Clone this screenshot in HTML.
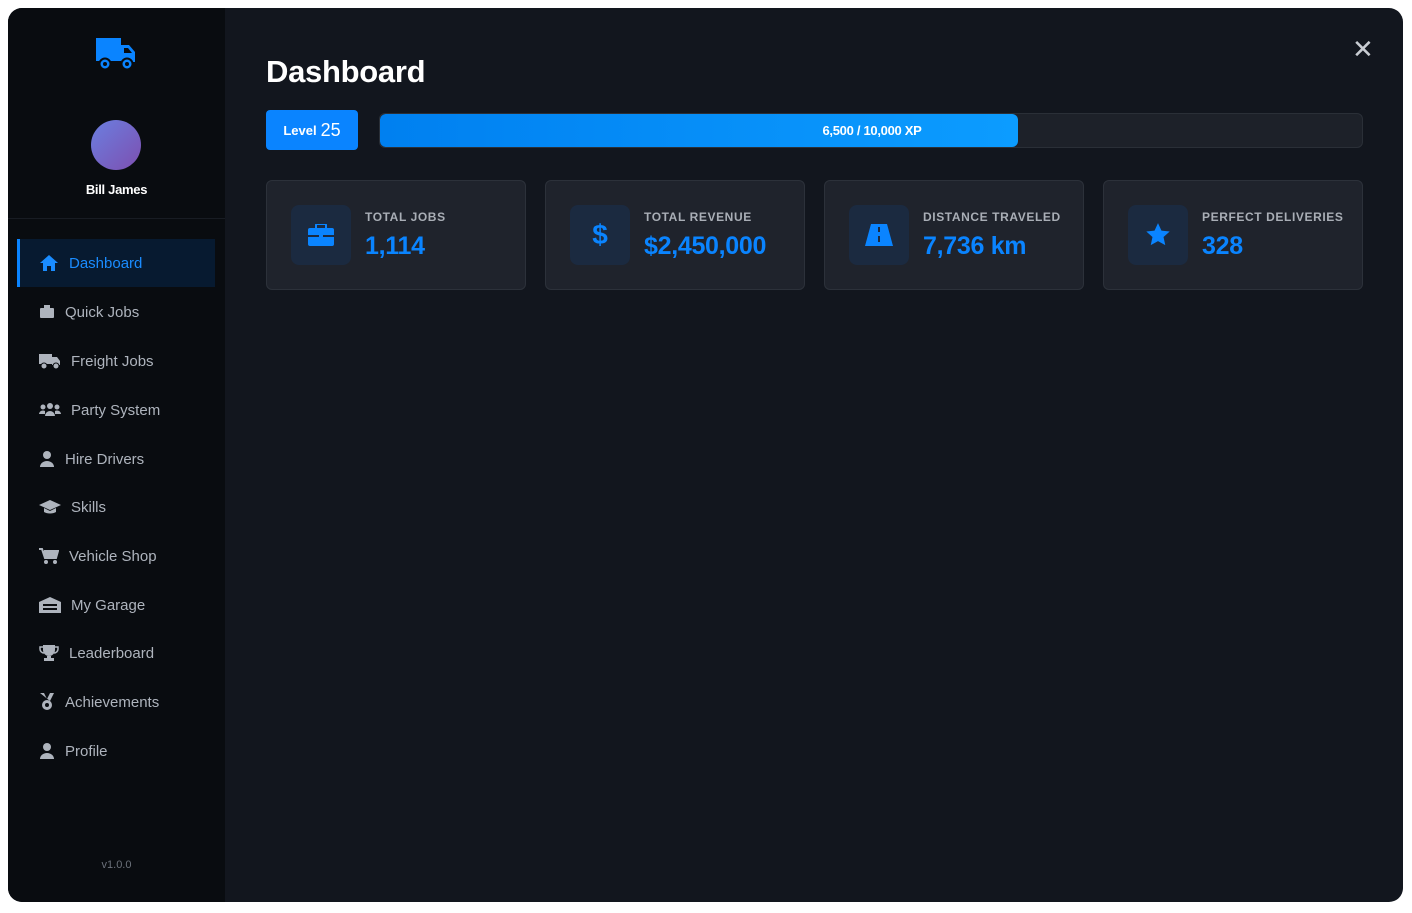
<!DOCTYPE html>
<html><head><meta charset="utf-8"><style>
*{box-sizing:border-box;margin:0;padding:0}
body{width:1412px;height:913px;background:#fff;font-family:"Liberation Sans",sans-serif;position:relative;overflow:hidden}
.win{position:absolute;left:8px;top:8px;width:1395px;height:894px;border-radius:14px;overflow:hidden;background:#12161e}
.side{position:absolute;left:0;top:0;width:217px;height:894px;background:#090c10}
.logo{position:absolute;left:87px;top:29px}
.av{position:absolute;left:83px;top:112px;width:50px;height:50px;border-radius:50%;background:linear-gradient(135deg,#6b7fe0,#7d4fb0)}
.name{position:absolute;left:0;width:217px;top:174px;text-align:center;color:#fff;font-weight:bold;font-size:13px;letter-spacing:-0.3px}
.sep{position:absolute;left:0;top:210px;width:217px;height:1px;background:#181c23}
.nav{position:absolute;left:9px;height:48px;width:198px;display:flex;align-items:center;padding-left:22px;color:#aeb4bd;font-size:15px}
.nav svg{margin-right:10px}
.nav.act{background:#071a30;border-left:3px solid #0a84ff;color:#1a8cff;padding-left:19px}
.ver{position:absolute;left:0;width:217px;top:851px;text-align:center;color:#6c727b;font-size:11px}
h1{position:absolute;left:258px;top:46px;color:#fff;font-size:31px;font-weight:bold;letter-spacing:-0.3px}
.close{position:absolute;left:1344px;top:26px;color:#c8ccd2;font-size:26px}
.lvl{position:absolute;left:258px;top:102px;width:92px;height:40px;background:#0a84ff;border-radius:4px;color:#fff;font-size:13px;font-weight:bold;display:flex;align-items:center;justify-content:center;gap:4px}
.lvl b{font-size:18px;font-weight:normal}
.bar{position:absolute;left:371px;top:105px;width:984px;height:35px;background:#1d2129;border:1px solid #2a2f37;border-radius:6px;overflow:hidden}
.fill{position:absolute;left:0;top:0;height:100%;width:638px;background:linear-gradient(90deg,#0080f0,#0c9cff);border-radius:6px}
.bt{position:absolute;left:0;width:984px;top:9px;text-align:center;color:#fff;font-size:13px;font-weight:bold;letter-spacing:-0.3px}
.card{position:absolute;top:172px;width:260px;height:110px;background:#1f232c;border:1px solid #2c313a;border-radius:6px}
.ic{position:absolute;left:24px;top:24px;width:60px;height:60px;background:#1b2a40;border-radius:8px;display:flex;align-items:center;justify-content:center}
.lab{position:absolute;left:98px;top:29px;color:#a9aeb6;font-size:12px;font-weight:bold;letter-spacing:0.6px}
.val{position:absolute;left:98px;top:51px;color:#0a84ff;font-size:25px;font-weight:bold;letter-spacing:-0.3px}
</style></head><body>
<div class="win">
<div class="side">
<svg class="logo" width="42" height="34" viewBox="0 0 42 34"><path d="M1 1h25v23H1z" fill="#0a84ff"/><path d="M26 8h8l6 7v10H26z" fill="#0a84ff"/><path d="M29 11h4l4 5h-8z" fill="#090c10"/><circle cx="10" cy="27" r="5.5" fill="#0a84ff" stroke="#090c10" stroke-width="2"/><circle cx="32" cy="27" r="5.5" fill="#0a84ff" stroke="#090c10" stroke-width="2"/><circle cx="10" cy="27" r="2" fill="#090c10"/><circle cx="32" cy="27" r="2" fill="#090c10"/></svg>
<div class="av"></div>
<div class="name">Bill James</div>
<div class="sep"></div>
<div class="nav act" style="top:231px"><svg width="20" height="18" viewBox="0 0 20 18"><path d="M10 1L1 9h3v8h4v-5h4v5h4V9h3z" fill="#1a8cff"/></svg>Dashboard</div>
<div class="nav" style="top:280px"><svg width="16" height="14"><rect x="1" y="3" width="14" height="10" rx="1" fill="#aeb4bd"/><rect x="5" y="0" width="6" height="3" fill="#aeb4bd"/></svg>Quick Jobs</div>
<div class="nav" style="top:329px"><svg width="22" height="16"><rect x="0" y="1" width="13" height="10" fill="#aeb4bd"/><path d="M13 4h5l3 4v4h-8z" fill="#aeb4bd"/><circle cx="5" cy="13" r="3" fill="#aeb4bd" stroke="#090c10"/><circle cx="17" cy="13" r="3" fill="#aeb4bd" stroke="#090c10"/></svg>Freight Jobs</div>
<div class="nav" style="top:378px"><svg width="22" height="16"><circle cx="11" cy="4" r="3" fill="#aeb4bd"/><circle cx="4" cy="5" r="2.5" fill="#aeb4bd"/><circle cx="18" cy="5" r="2.5" fill="#aeb4bd"/><path d="M6 14a5 5 0 0 1 10 0zM0 12a4 4 0 0 1 6-3v3zM22 12a4 4 0 0 0-6-3v3z" fill="#aeb4bd"/></svg>Party System</div>
<div class="nav" style="top:427px"><svg width="16" height="16"><circle cx="8" cy="4" r="4" fill="#aeb4bd"/><path d="M1 16a7 6 0 0 1 14 0z" fill="#aeb4bd"/></svg>Hire Drivers</div>
<div class="nav" style="top:475px"><svg width="22" height="14"><path d="M11 0L0 5l11 5 11-5z" fill="#aeb4bd"/><path d="M5 8v4c3 2 9 2 12 0V8l-6 3z" fill="#aeb4bd"/></svg>Skills</div>
<div class="nav" style="top:524px"><svg width="20" height="16"><path d="M0 1h3l3 9h11l2-7H5" fill="#aeb4bd" stroke="#aeb4bd" stroke-width="2"/><circle cx="7" cy="14" r="2" fill="#aeb4bd"/><circle cx="16" cy="14" r="2" fill="#aeb4bd"/></svg>Vehicle Shop</div>
<div class="nav" style="top:573px"><svg width="22" height="16"><path d="M0 5l11-5 11 5v11H0z" fill="#aeb4bd"/><rect x="4" y="7" width="14" height="2" fill="#090c10"/><rect x="4" y="11" width="14" height="2" fill="#090c10"/></svg>My Garage</div>
<div class="nav" style="top:621px"><svg width="20" height="16"><path d="M4 0h12v5a6 6 0 0 1-12 0zM8 11h4v2h3v3H5v-3h3z" fill="#aeb4bd"/><path d="M4 2H1v2a4 4 0 0 0 4 4M16 2h3v2a4 4 0 0 1-4 4" fill="none" stroke="#aeb4bd" stroke-width="1.5"/></svg>Leaderboard</div>
<div class="nav" style="top:670px"><svg width="16" height="18"><path d="M1 0h4l3 6 3-6h4l-4 8" fill="#aeb4bd"/><circle cx="8" cy="12" r="5" fill="#aeb4bd"/><circle cx="8" cy="12" r="2" fill="#090c10"/></svg>Achievements</div>
<div class="nav" style="top:719px"><svg width="16" height="16"><circle cx="8" cy="4" r="4" fill="#aeb4bd"/><path d="M1 16a7 6 0 0 1 14 0z" fill="#aeb4bd"/></svg>Profile</div>
<div class="ver">v1.0.0</div>
</div>
<h1>Dashboard</h1>
<div class="close">✕</div>
<div class="lvl">Level <b>25</b></div>
<div class="bar"><div class="fill"></div><div class="bt">6,500 / 10,000 XP</div></div>
<div class="card" style="left:258px"><div class="ic"><svg width="26" height="22"><rect x="0" y="4" width="26" height="18" rx="2" fill="#0a84ff"/><rect x="8" y="0" width="10" height="5" rx="1" fill="none" stroke="#0a84ff" stroke-width="2"/><rect x="0" y="11" width="26" height="2" fill="#1b2a40"/><rect x="11" y="10" width="4" height="4" fill="#0a84ff"/></svg></div><div class="lab">TOTAL JOBS</div><div class="val">1,114</div></div>
<div class="card" style="left:537px"><div class="ic"><span style="color:#0a84ff;font-size:28px;font-weight:bold">$</span></div><div class="lab">TOTAL REVENUE</div><div class="val">$2,450,000</div></div>
<div class="card" style="left:816px"><div class="ic"><svg width="28" height="22"><path d="M6 0h16l6 22H0z" fill="#0a84ff"/><rect x="13" y="3" width="2" height="5" fill="#1b2a40"/><rect x="13" y="12" width="2" height="6" fill="#1b2a40"/></svg></div><div class="lab">DISTANCE TRAVELED</div><div class="val">7,736 km</div></div>
<div class="card" style="left:1095px"><div class="ic"><svg width="26" height="26" viewBox="0 0 24 24"><path d="M12 1l3.2 7 7.6.8-5.7 5.1 1.6 7.5L12 17.6 5.3 21.4l1.6-7.5L1.2 8.8 8.8 8z" fill="#0a84ff"/></svg></div><div class="lab">PERFECT DELIVERIES</div><div class="val">328</div></div>
</div>
</body></html>
